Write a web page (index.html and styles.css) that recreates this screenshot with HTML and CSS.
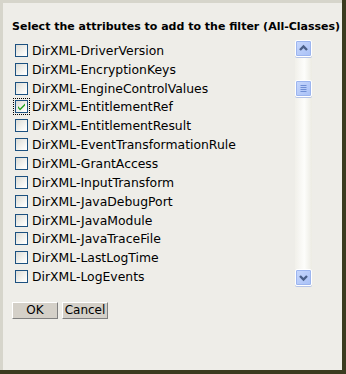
FILE: index.html
```html
<!DOCTYPE html>
<html>
<head>
<meta charset="utf-8">
<link rel="stylesheet" href="styles.css">
</head>
<body>
<div class="dialog">
  <div class="title">Select the attributes to add to the filter (All-Classes)</div>
  <div class="listbox">
    <div class="items">
      <label class="row"><span class="cb"></span>DirXML-DriverVersion</label>
      <label class="row"><span class="cb"></span>DirXML-EncryptionKeys</label>
      <label class="row"><span class="cb"></span>DirXML-EngineControlValues</label>
      <label class="row"><span class="cb checked focus"><svg viewBox="0 0 13 13" width="13" height="13"><path d="M3 6 L5 8.5 L10 3.5 L10 5.5 L5 10.5 L3 8 Z" fill="#21a121"/></svg></span>DirXML-EntitlementRef</label>
      <label class="row"><span class="cb"></span>DirXML-EntitlementResult</label>
      <label class="row"><span class="cb"></span>DirXML-EventTransformationRule</label>
      <label class="row"><span class="cb"></span>DirXML-GrantAccess</label>
      <label class="row"><span class="cb"></span>DirXML-InputTransform</label>
      <label class="row"><span class="cb"></span>DirXML-JavaDebugPort</label>
      <label class="row"><span class="cb"></span>DirXML-JavaModule</label>
      <label class="row"><span class="cb"></span>DirXML-JavaTraceFile</label>
      <label class="row"><span class="cb"></span>DirXML-LastLogTime</label>
      <label class="row"><span class="cb"></span>DirXML-LogEvents</label>
    </div>
    <div class="scrollbar">
      <div class="sbtn"><svg viewBox="0 0 15 15" width="15" height="15"><path d="M4 9 L7.5 5.5 L11 9" fill="none" stroke="#4a5f88" stroke-width="2.4"/></svg></div>
      <div class="track">
        <div class="thumb"><svg viewBox="0 0 15 15" width="15" height="15"><path d="M4.5 4.5h6M4.5 6.5h6M4.5 8.5h6M4.5 10.5h6" stroke="#6f8ed4" stroke-width="1"/></svg></div>
      </div>
      <div class="sbtn"><svg viewBox="0 0 15 15" width="15" height="15"><path d="M4 6 L7.5 9.5 L11 6" fill="none" stroke="#4a5f88" stroke-width="2.4"/></svg></div>
    </div>
  </div>
  <div class="buttons">
    <button class="btn">OK</button>
    <button class="btn">Cancel</button>
  </div>
</div>
</body>
</html>
```
FILE: styles.css
```css
html, body {
  margin: 0;
  padding: 0;
}
body {
  width: 346px;
  height: 374px;
  background: #3b3b1f;
  font-family: "DejaVu Sans", Verdana, sans-serif;
  overflow: hidden;
}
.dialog {
  box-sizing: border-box;
  width: 342px;
  height: 370px;
  background: #eeede8;
  border-top: 3px solid #d6d5cb;
  border-left: 3px solid #d6d5cb;
  padding: 17px 0 0 9px;
}
.title {
  font-weight: bold;
  font-size: 11px;
  line-height: 14px;
  color: #000;
  white-space: nowrap;
}
.listbox {
  display: flex;
  width: 301px;
  height: 246px;
  margin-top: 6px;
}
.items {
  flex: 1;
  display: flex;
  flex-direction: column;
  padding-top: 1px;
}
.row {
  display: flex;
  align-items: center;
  height: 19px;
  font-size: 12.4px;
  color: #000;
  white-space: nowrap;
}
.cb {
  box-sizing: border-box;
  width: 13px;
  height: 13px;
  margin: 0 4px 0 3px;
  border: 1px solid #1c5180;
  background: linear-gradient(135deg, #dcdcd6 0%, #fbfbf9 80%, #ffffff 100%);
  position: relative;
}
.cb svg {
  position: absolute;
  left: -1px;
  top: -1px;
}
.cb.focus {
  outline: 1px dotted #000;
  outline-offset: 1px;
}
.scrollbar {
  width: 17px;
  margin-right: 1px;
  display: flex;
  flex-direction: column;
  background: linear-gradient(90deg, #f1f0ea, #fdfdfb 55%, #ecebe3);
}
.sbtn, .thumb {
  box-sizing: border-box;
  width: 17px;
  height: 17px;
  border: 1px solid #fff;
  border-radius: 2px;
  background: linear-gradient(135deg, #c8d8fd, #a8c0f6);
  box-shadow: inset 0 0 0 1px #9cb5ef, 0 1px 0 0 #b6c4e6;
  display: flex;
  align-items: center;
  justify-content: center;
}
.track {
  flex: 1;
  padding-top: 23px;
}
.buttons {
  display: flex;
  gap: 4px;
  margin-top: 16px;
}
.btn {
  box-sizing: border-box;
  width: 46px;
  height: 17px;
  padding: 0;
  font-family: "DejaVu Sans", Verdana, sans-serif;
  font-size: 12px;
  line-height: 13px;
  color: #000;
  background: #d4d0c8;
  border: 1px solid;
  border-color: #ffffff #808080 #808080 #ffffff;
}
```
